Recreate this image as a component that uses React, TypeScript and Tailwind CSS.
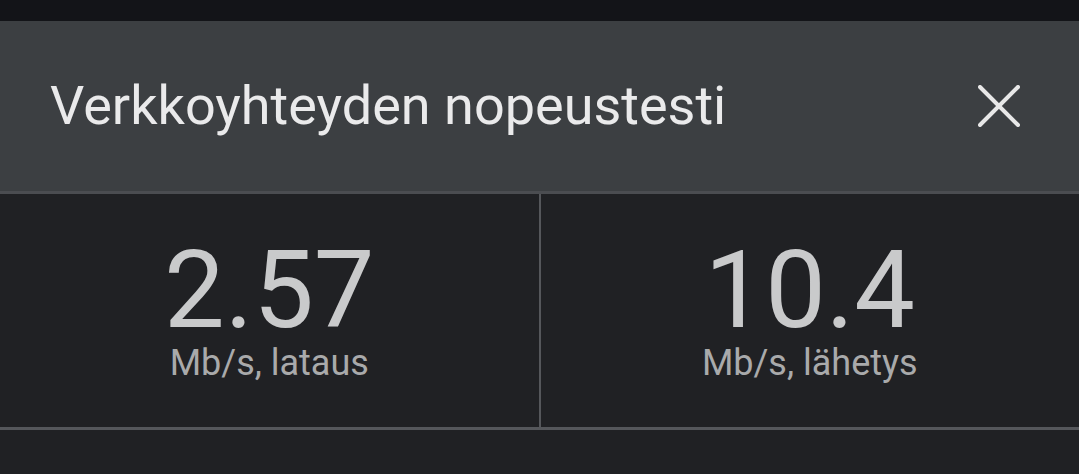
import React from 'react'

const Stat = ({ value, label }: { value: string; label: string }) => (
  <div className="flex flex-1 flex-col items-center pt-[46px]">
    <span className="text-[108px] leading-[100px] text-[#c9cacb]">{value}</span>
    <span className="mt-[3px] text-[36px] leading-[40px] text-[#a9aaab]">{label}</span>
  </div>
)

const App = () => {
  return (
    <div className="flex h-[474px] w-[1079px] flex-col overflow-hidden bg-[#202124]" style={{ fontFamily: 'Roboto, "Noto Sans", sans-serif' }}>
      <div className="h-[21px] bg-[#131418]" />
      <div className="flex h-[170px] items-center justify-between bg-[#3c3f42] pl-[50px] pr-[59px]">
        <h1 className="text-[54px] leading-none text-[#eaeaeb]">Verkkoyhteyden nopeustesti</h1>
        <svg width="42" height="42" viewBox="0 0 42 42" stroke="#e8e8e8" strokeWidth="4" strokeLinecap="round">
          <line x1="2" y1="2" x2="40" y2="40" />
          <line x1="40" y1="2" x2="2" y2="40" />
        </svg>
      </div>
      <div className="h-[3px] bg-[#4b4d51]" />
      <div className="flex h-[233px]">
        <Stat value="2.57" label="Mb/s, lataus" />
        <div className="w-[2px] bg-[#55575b]" />
        <Stat value="10.4" label="Mb/s, lähetys" />
      </div>
      <div className="h-[3px] bg-[#55575b]" />
      <div className="flex-1" />
    </div>
  )
}

export default App
